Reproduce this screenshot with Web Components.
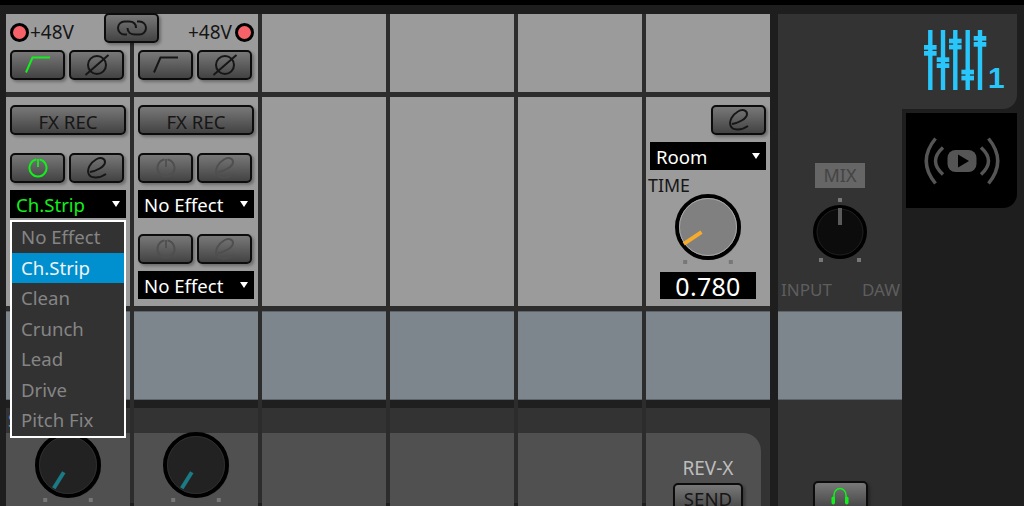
<!DOCTYPE html>
<html>
<head>
<meta charset="utf-8">
<title>Mixer</title>
<style>
  html, body { margin: 0; height: 506px; overflow: hidden; background: #1e1e1e; }
  body { font-family: "Noto Sans", "Liberation Sans", sans-serif; }
</style>
</head>
<body>
<mixer-app></mixer-app>

<script>
const ICONS = {
  filter: '<svg width="26" height="18" viewBox="0 0 26 18"><path d="M1 16.500 L7.500 1.500 H25" fill="none" stroke="currentColor" stroke-width="2"/></svg>',
  phase: '<svg width="26" height="24" viewBox="0 0 26 24"><circle cx="13" cy="12" r="9" fill="none" stroke="currentColor" stroke-width="2"/><path d="M1.500 22 L24.500 2" stroke="currentColor" stroke-width="2"/></svg>',
  power: '<svg width="20" height="20" viewBox="0 0 20 20"><path d="M8.500 1.600 A8.500 8.500 0 1 0 11.500 1.600" fill="none" stroke="currentColor" stroke-width="2"/><path d="M10 1 V9" stroke="currentColor" stroke-width="1.800"/></svg>',
  edit: '<svg width="20" height="22" viewBox="0 0 20 22"><path d="M3 15 C9 14 18 10 18 5 C18 1 13 0 9 2.500 C3 6 0 12 1.500 16.500 C3 21.500 12 22 19 17" fill="none" stroke="currentColor" stroke-width="2"/></svg>',
  link: '<svg width="32" height="16" viewBox="0 0 32 16"><path d="M20 8 C20 3.500 17 1.500 13 1.500 H8.500 A6.500 6.500 0 0 0 8.500 14.500 H11" fill="none" stroke="currentColor" stroke-width="2"/><path d="M11.500 8 C11.500 12.500 15 14.500 19 14.500 H23.500 A6.500 6.500 0 0 0 23.500 1.500 H21" fill="none" stroke="currentColor" stroke-width="2"/></svg>',
  phones: '<svg width="20" height="20" viewBox="0 0 20 20"><path d="M4 13 V9 A6 6.500 0 0 1 16 9 V13" fill="none" stroke="currentColor" stroke-width="1.500"/><rect x="1.500" y="10.500" width="3.500" height="8" rx="1.700" fill="currentColor"/><rect x="15" y="10.500" width="3.500" height="8" rx="1.700" fill="currentColor"/></svg>'
};

class MixButton extends HTMLElement {
  constructor() {
    super();
    const icon = this.getAttribute('icon');
    this.attachShadow({ mode: 'open' });
    this.shadowRoot.innerHTML = `
      <style>
        :host {
          display: flex;
          align-items: center;
          justify-content: center;
          box-sizing: border-box;
          width: 55px;
          height: 30px;
          flex: none;
          border: 2px solid #0c0c0c;
          border-radius: 5px;
          background: linear-gradient(#787878, #434343);
          box-shadow: 2px 2px 3px rgba(0,0,0,.3);
          color: #161616;
          font-size: 18.600px;
          line-height: 15px;
        }
        :host(:not([icon])) { padding-top: 2px; }
        :host([wide]) { width: 116px; }
        :host([send]) { width: 70px; padding-top: 0; }
        :host([on]) { color: #12f01c; }
        :host([dim]) { color: #4f4f4f; }
        svg { display: block; }
      </style>
      ${icon ? ICONS[icon] : '<slot></slot>'}`;
  }
}

class MixSelect extends HTMLElement {
  constructor() {
    super();
    this.attachShadow({ mode: 'open' });
    this.shadowRoot.innerHTML = `
      <style>
        :host {
          display: flex;
          align-items: center;
          justify-content: space-between;
          box-sizing: border-box;
          width: 116px;
          height: 28px;
          padding: 0 6px;
          background: #000;
          color: #fff;
          font-size: 18.600px;
          flex: none;
        }
        :host([on]) { color: #12f01c; }
        .arrow {
          width: 0; height: 0;
          border-left: 4.500px solid transparent;
          border-right: 4.500px solid transparent;
          border-top: 6px solid #fff;
        }
      </style>
      <slot></slot><span class="arrow"></span>`;
  }
}

class MixLed extends HTMLElement {
  constructor() {
    super();
    this.attachShadow({ mode: 'open' });
    this.shadowRoot.innerHTML = `
      <style>
        :host {
          display: flex;
          align-items: center;
          gap: 1px;
          color: #161616;
          font-size: 19px;
          height: 20px;
        }
        :host([right]) { flex-direction: row-reverse; gap: 3px; }
        i {
          box-sizing: border-box;
          display: block;
          width: 19px;
          height: 19px;
          border: 3.500px solid #000;
          border-radius: 50%;
          background: #f76268;
        }
      </style>
      <i></i><slot></slot>`;
  }
}

class MixKnob extends HTMLElement {
  constructor() {
    super();
    const light = this.hasAttribute('light');
    const fill = light ? '#808080' : '#222';
    const edge = light ? '#a8a8a8' : '#2e2e2e';
    const mark = light ? '#f7ab2c' : '#1b7a86';
    const line = light ? 'M10.800 51.800 L28.500 40.200' : 'M20.800 58.300 L30.800 42.300';
    this.attachShadow({ mode: 'open' });
    this.shadowRoot.innerHTML = `
      <style>
        :host { display: block; width: 70px; height: 74px; flex: none; }
        svg { display: block; }
      </style>
      <svg width="70" height="74" viewBox="0 0 70 74">
        <circle cx="36" cy="36" r="32" fill="#000" opacity=".25"/>
        <circle cx="35" cy="35" r="31" fill="${fill}" stroke="#000" stroke-width="4"/>
        <circle cx="35" cy="35" r="28.500" fill="none" stroke="${edge}" stroke-width="1"/>
        <path d="${line}" stroke="${mark}" stroke-width="4"/>
        <rect x="10.200" y="68" width="4" height="4" fill="#777"/>
        <rect x="55.800" y="68" width="4" height="4" fill="#777"/>
      </svg>`;
  }
}

class MixMenu extends HTMLElement {
  constructor() {
    super();
    const items = this.getAttribute('items').split(',');
    const active = this.getAttribute('active');
    this.attachShadow({ mode: 'open' });
    this.shadowRoot.innerHTML = `
      <style>
        :host {
          display: block;
          position: absolute;
          box-sizing: border-box;
          width: 116px;
          border: 2px solid #fff;
          background: #323232;
          color: #858585;
          font-size: 18.600px;
        }
        div { box-sizing: border-box; display: flex; align-items: center; height: 30.500px; padding: 0 0 1px 9px; }
        .active { background: #0090cf; color: #f2f2f2; }
      </style>
      ${items.map((it) => `<div class="${it === active ? 'active' : ''}">${it}</div>`).join('')}`;
  }
}

class MasterStrip extends HTMLElement {
  constructor() {
    super();
    this.attachShadow({ mode: 'open' });
    this.shadowRoot.innerHTML = `
      <style>
        :host {
          display: grid;
          grid-template-rows: 297px 89px 1fr;
          width: 124px;
          height: 492px;
          background: #333;
          color: #5e5e5e;
          font-size: 17px;
        }
        .mix { display: flex; flex-direction: column; align-items: center; padding-top: 149px; }
        .tag {
          width: 50px; height: 25px; line-height: 25px; text-align: center;
          background: #666; color: #444; font-size: 18px;
        }
        .dial { display: block; margin-top: 8px; }
        .ends { display: flex; justify-content: space-between; align-self: stretch; padding: 0 2px 0 3px; margin-top: 17px; line-height: 22px; }
        .band { box-sizing: border-box; background: #7e868d; border-top: 1px solid #5f6468; border-bottom: 1px solid #5f6468; }
        .foot { display: flex; justify-content: center; padding-top: 81px; }
      </style>
      <div class="mix">
        <div class="tag">MIX</div>
        <svg class="dial" width="64" height="66" viewBox="0 0 64 66">
          <rect x="30" y="2" width="4" height="4" fill="#777"/>
          <circle cx="32" cy="36" r="25" fill="#0c0c0c" stroke="#000" stroke-width="4"/>
          <circle cx="32" cy="36" r="23" fill="none" stroke="#202020"/>
          <path d="M32 12 V29" stroke="#5a5a5a" stroke-width="4"/>
          <rect x="11" y="62" width="4" height="4" fill="#777"/>
          <rect x="49" y="62" width="4" height="4" fill="#777"/>
        </svg>
        <div class="ends"><span>INPUT</span><span>DAW</span></div>
      </div>
      <div class="band"></div>
      <div class="foot"><mix-button icon="phones" on></mix-button></div>`;
  }
}

class SideTabs extends HTMLElement {
  constructor() {
    super();
    // bar x offset and the top of the upper cap for each fader
    const faders = [[26.300, 45], [39, 57.300], [51.300, 38.700], [63.700, 69.700], [76, 36]];
    const bars = faders.map(([x, y]) => `
      <rect x="${x - 0.200}" y="30" width="4.400" height="60"/>
      <rect x="${x - 4.300}" y="${y}" width="12.600" height="4.700"/>
      <rect x="${x - 4.300}" y="${y + 6}" width="12.600" height="4.700"/>`).join('');
    this.attachShadow({ mode: 'open' });
    this.shadowRoot.innerHTML = `
      <style>
        :host { display: flex; flex-direction: column; width: 115px; gap: 4px; flex: none; }
        .tab { display: block; height: 95px; border-bottom-right-radius: 14px; }
        .mixer { background: #333; color: #29c6fb; position: relative; }
        .mixer svg { position: absolute; left: 0; top: -14px; }
        .mixer b { position: absolute; left: 86px; top: 47px; font-size: 30px; line-height: 34px; font-family: "Liberation Sans", sans-serif; }
        .live { background: #000; margin-left: 4px; display: flex; align-items: center; justify-content: center; }
      </style>
      <div class="tab mixer">
        <svg width="90" height="100" viewBox="0 0 90 100" fill="currentColor">${bars}</svg>
        <b>1</b>
      </div>
      <div class="tab live">
        <svg width="78" height="50" viewBox="0 0 78 50" fill="none" stroke="#555" stroke-width="3.500">
          <path d="M12.500 2.500 Q-6 25 12.500 47.500"/><path d="M65.500 2.500 Q84 25 65.500 47.500"/>
          <path d="M20 11.500 Q5 25 20 38.500"/><path d="M58 11.500 Q73 25 58 38.500"/>
          <rect x="24.500" y="14" width="29" height="22" rx="8" fill="#555" stroke="none"/>
          <path d="M35 18.500 V31.500 L46 25z" fill="#000" stroke="none"/>
        </svg>
      </div>`;
  }
}

class MixerApp extends HTMLElement {
  constructor() {
    super();
    const blank = '<div class="cell"></div>';
    this.attachShadow({ mode: 'open' });
    this.shadowRoot.innerHTML = `
      <style>
        :host { display: block; font-family: "Noto Sans", "Liberation Sans", sans-serif; }
        .top { height: 5px; background: #000; }
        .main { display: flex; padding: 9px 0 0 6px; align-items: flex-start; }
        .strips {
          position: relative;
          display: grid;
          grid-template-columns: repeat(6, 124px);
          grid-template-rows: 78px 209px 89px 98px;
          column-gap: 4px;
          row-gap: 5px;
          width: 764px;
          background: #2c2c2c;
          margin-right: 8px;
        }
        .cell {
          box-sizing: border-box;
          background: #9b9b9b;
          display: flex;
          flex-direction: column;
          align-items: flex-start;
          color: #161616;
        }
        .head { padding: 8px 4px 0; }
        .body { padding: 8px 4px 0; }
        .row { display: flex; gap: 4px; }
        .line { display: flex; align-self: stretch; }
        .line.end { justify-content: flex-end; }
        .mt8 { margin-top: 8px; }
        .mt7 { margin-top: 7px; }
        .mt16 { margin-top: 16px; }
        .mt18 { margin-top: 18px; }
        .band { background: #7e868d; border-top: 1px solid #5f6468; border-bottom: 1px solid #5f6468; }
        .low { background: #333; margin-top: 3px; height: 98px; padding-top: 25px; overflow: hidden; position: relative; box-shadow: 0 -8px 0 #1f1f1f; }
        .deck { align-self: stretch; flex: 1; background: #505050; display: flex; flex-direction: column; align-items: center; }
        .deck mix-knob { margin-top: -3px; }
        .stray { position: absolute; left: 2px; top: 0; color: #4a8fc0; font-size: 18px; }
        .rev { margin: 0 9px 0 0; padding-left: 9px; border-top-right-radius: 18px; }
        .rev span { color: #bdbdbd; font-size: 19px; margin-top: 23px; line-height: 24px; }
        .rev mix-button { margin-top: 3px; }
        .time { font-size: 17.800px; line-height: 20px; margin: 5px 0 0 -2px; }
        .value {
          width: 96px; height: 27px; line-height: 29px; text-align: center;
          background: #000; color: #fff; font-size: 25px; letter-spacing: .3px;
          margin: 6.500px 0 0 10px;
        }
        .dial { margin: -3.500px 0 0 22.500px; }
        mix-menu { left: 4px; top: 206px; }
        .linkbtn { position: absolute; left: 98px; top: -1px; }
      </style>
      <div class="top"></div>
      <div class="main">
        <div class="strips">
          <div class="cell head">
            <mix-led>+48V</mix-led>
            <div class="row mt8"><mix-button icon="filter" on></mix-button><mix-button icon="phase"></mix-button></div>
          </div>
          <div class="cell head">
            <div class="line end"><mix-led right>+48V</mix-led></div>
            <div class="row mt8"><mix-button icon="filter"></mix-button><mix-button icon="phase"></mix-button></div>
          </div>
          ${blank.repeat(4)}

          <div class="cell body">
            <mix-button wide>FX REC</mix-button>
            <div class="row mt18"><mix-button icon="power" on></mix-button><mix-button icon="edit"></mix-button></div>
            <mix-select class="mt7" on>Ch.Strip</mix-select>
          </div>
          <div class="cell body">
            <mix-button wide>FX REC</mix-button>
            <div class="row mt18"><mix-button icon="power" dim></mix-button><mix-button icon="edit" dim></mix-button></div>
            <mix-select class="mt7">No Effect</mix-select>
            <div class="row mt16"><mix-button icon="power" dim></mix-button><mix-button icon="edit" dim></mix-button></div>
            <mix-select class="mt7">No Effect</mix-select>
          </div>
          ${blank.repeat(3)}
          <div class="cell body">
            <div class="line end"><mix-button icon="edit"></mix-button></div>
            <mix-select class="mt7">Room</mix-select>
            <div class="time">TIME</div>
            <mix-knob class="dial" light></mix-knob>
            <div class="value">0.780</div>
          </div>

          ${'<div class="cell band"></div>'.repeat(6)}

          <div class="cell low"><span class="stray">S</span><div class="deck"><mix-knob></mix-knob></div></div>
          <div class="cell low"><div class="deck"><mix-knob></mix-knob></div></div>
          ${'<div class="cell low"><div class="deck"></div></div>'.repeat(3)}
          <div class="cell low">
            <div class="deck rev"><span>REV-X</span><mix-button send>SEND</mix-button></div>
          </div>

          <mix-button class="linkbtn" icon="link"></mix-button>
          <mix-menu items="No Effect,Ch.Strip,Clean,Crunch,Lead,Drive,Pitch Fix" active="Ch.Strip"></mix-menu>
        </div>
        <master-strip></master-strip>
        <side-tabs></side-tabs>
      </div>`;
  }
}

customElements.define('mix-button', MixButton);
customElements.define('mix-select', MixSelect);
customElements.define('mix-led', MixLed);
customElements.define('mix-knob', MixKnob);
customElements.define('mix-menu', MixMenu);
customElements.define('master-strip', MasterStrip);
customElements.define('side-tabs', SideTabs);
customElements.define('mixer-app', MixerApp);
</script>
</body>
</html>
